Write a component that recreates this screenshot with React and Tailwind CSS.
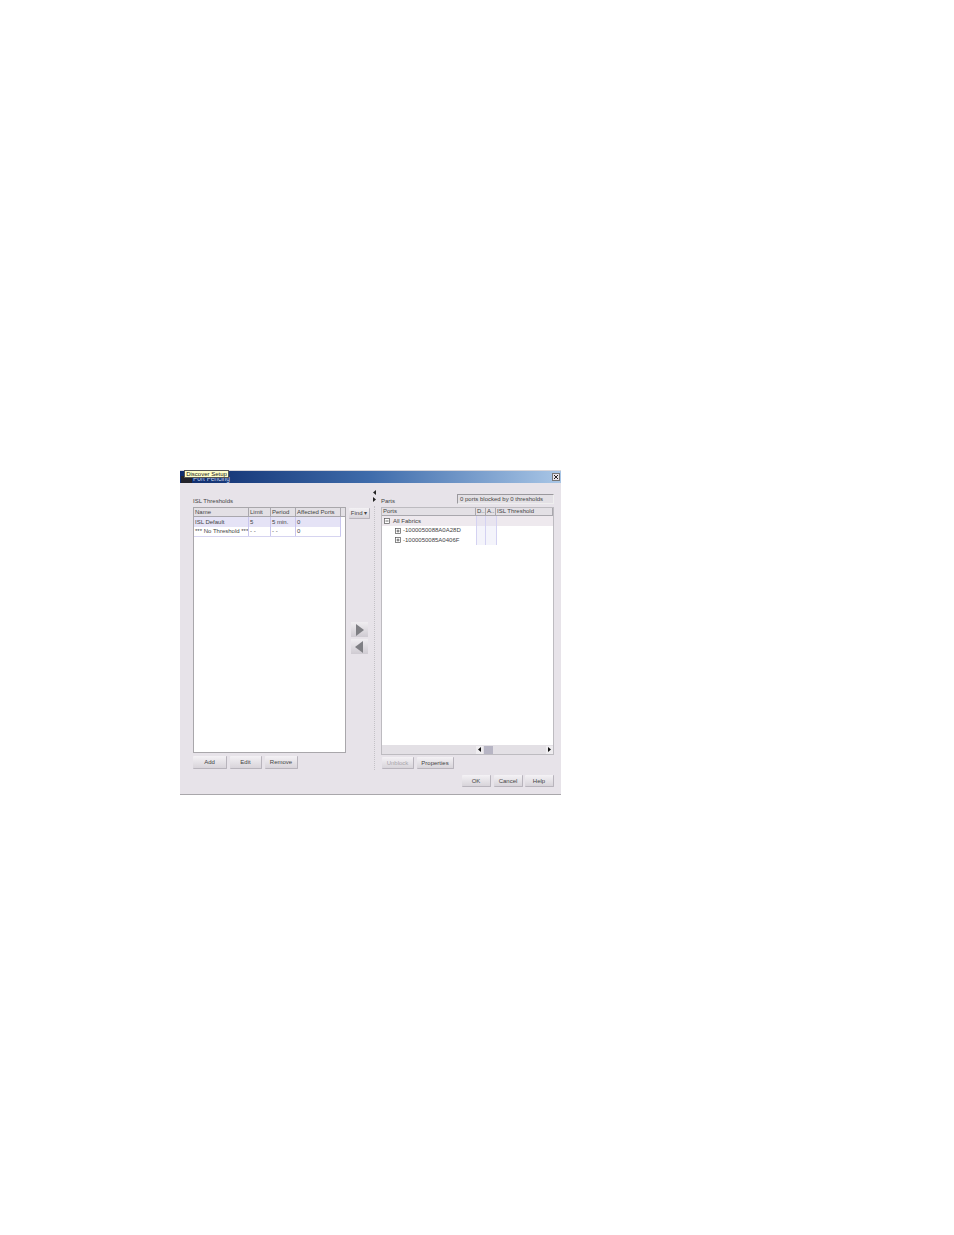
import React from "react";

const Btn = ({ w, h = "h-[12px] pt-[1px]", children, disabled }) => (
  <div
    className={`${h} ${w} flex items-center justify-center text-[6px] rounded-[1px] border-r border-b border-[#b8b4bc] bg-gradient-to-b from-[#f4f2f5] to-[#d8d4da] ${disabled ? "text-[#a8a6ac]" : "text-[#444]"}`}
  >
    {children}
  </div>
);

const Head = ({ w, children, flex }) => (
  <div className={`${flex ? "flex-1" : w} h-full flex items-center pl-[1px] border-r border-[#a9a7ad] truncate`}>{children}</div>
);

const Cell = ({ w, children }) => (
  <div className={`${w} h-full flex items-center pl-[1px] border-r border-[#c9c6ee] whitespace-nowrap overflow-hidden`}>{children}</div>
);

const Plus = ({ minus }) => (
  <svg width="6" height="6" viewBox="0 0 6 6" className="shrink-0">
    <rect x="0.5" y="0.5" width="5" height="5" fill="#fff" stroke="#555" strokeWidth="0.7" />
    <path d={minus ? "M1.5 3h3" : "M1.5 3h3M3 1.5v3"} stroke="#333" strokeWidth="0.7" />
  </svg>
);

export default function App() {
  return (
    <div className="min-h-[1235px] bg-white pt-[470px] pl-[180px] font-['Liberation_Sans',Arial,sans-serif] text-[#444]">
      <div className="relative w-[381px] h-[325px] bg-[#e7e3e9] border-t border-[#d8d6da] border-b border-b-[#a9a7ab] flex flex-col">
        {/* Title bar */}
        <div className="h-[12px] shrink-0 flex items-center justify-end pr-[1px] bg-gradient-to-r from-[#0e2a6b] via-[#3f6cab] to-[#a9c6e6]">
          <div className="w-[8px] h-[8px] bg-[#e7e3e9] border border-[#777] flex items-center justify-center">
            <svg width="6" height="6" viewBox="0 0 6 6">
              <path d="M1 1l4 4M5 1l-4 4" stroke="#222" strokeWidth="1" />
            </svg>
          </div>
        </div>
        <div className="absolute left-[1px] top-[5px] w-[11px] h-[7px] bg-[#23232b]" />
        <div className="absolute left-[13px] top-[4px] text-[6.5px] leading-[8px] text-[#c6d4ea] whitespace-nowrap">Port Fencing</div>
        {/* Tooltip */}
        <div className="absolute left-[4px] top-[-1px] h-[8px] w-[45px] bg-[#ffffc8] border border-[#555] flex items-center justify-center text-[6px] leading-none text-[#222] whitespace-nowrap">
          Discover Setup
        </div>

        {/* Body */}
        <div className="flex-1 flex pl-[13px] pr-[7px] pt-[11px]">
          {/* Left column */}
          <div className="w-[153px] flex flex-col shrink-0">
            <div className="h-[13px] flex items-center text-[6px] leading-none">ISL Thresholds</div>
            <div className="h-[246px] bg-white border border-[#a9a7ab] flex flex-col text-[6px]">
              <div className="h-[9px] flex bg-[#e3e0e5] border-b border-[#a9a7ad] shrink-0">
                <Head w="w-[55px]">Name</Head>
                <Head w="w-[22px]">Limit</Head>
                <Head w="w-[25px]">Period</Head>
                <Head w="w-[45px]">Affected Ports</Head>
                <div className="flex-1" />
              </div>
              <div className="w-[147px] h-[10px] flex bg-[#e5e3f6] shrink-0">
                <Cell w="w-[55px]">ISL Default</Cell>
                <Cell w="w-[22px]">5</Cell>
                <Cell w="w-[25px]">5 min.</Cell>
                <Cell w="w-[45px]">0</Cell>
              </div>
              <div className="w-[147px] h-[10px] flex border-b border-[#d6d4f0] shrink-0">
                <Cell w="w-[55px]">*** No Threshold ***</Cell>
                <Cell w="w-[22px]">- -</Cell>
                <Cell w="w-[25px]">- -</Cell>
                <Cell w="w-[45px]">0</Cell>
              </div>
            </div>
            <div className="flex gap-[3px] mt-[3px]">
              <Btn w="w-[34px]" h="h-[13px] pt-[1px]">Add</Btn>
              <Btn w="w-[32px]" h="h-[13px] pt-[1px]">Edit</Btn>
              <Btn w="w-[33px]" h="h-[13px] pt-[1px]">Remove</Btn>
            </div>
          </div>

          {/* Middle column */}
          <div className="w-[23px] ml-[2px] flex flex-col items-center shrink-0 pt-[14px]">
            <Btn w="w-[21px]" h="h-[11px]">Find ▾</Btn>
            <div className="mt-[103px] w-[17px] h-[15px] bg-gradient-to-b from-[#f0eef1] to-[#cfcbd2] flex items-center justify-center">
              <svg width="9" height="12" viewBox="0 0 9 12">
                <path d="M1 0l8 6-8 6z" fill="#7f7f84" />
              </svg>
            </div>
            <div className="mt-[2px] w-[17px] h-[15px] bg-gradient-to-b from-[#f0eef1] to-[#cfcbd2] flex items-center justify-center">
              <svg width="9" height="12" viewBox="0 0 9 12">
                <path d="M8 0L0 6l8 6z" fill="#7f7f84" />
              </svg>
            </div>
          </div>

          {/* Divider */}
          <div className="w-[6px] shrink-0 flex flex-col items-center">
            <div className="h-[16px] flex flex-col items-center gap-[2px] shrink-0 -mt-[4px]">
              <svg width="3" height="5" viewBox="0 0 3 5"><path d="M3 0L0 2.5 3 5z" fill="#222" /></svg>
              <svg width="3" height="5" viewBox="0 0 3 5"><path d="M0 0l3 2.5L0 5z" fill="#222" /></svg>
            </div>
            <div className="h-[264px] border-l border-dotted border-[#c4c2c7]" />
          </div>

          {/* Right column */}
          <div className="flex-1 flex flex-col pl-[4px] min-w-0">
            <div className="h-[13px] flex items-start justify-between">
              <div className="h-[13px] flex items-center text-[6px] leading-none">Parts</div>
              <div className="w-[97px] h-[10px] border border-[#9a989d] border-b-[#eee] border-r-[#eee] bg-[#e3e0e5] flex items-center pl-[2px] text-[6px] whitespace-nowrap">
                0 ports blocked by 0 thresholds
              </div>
            </div>
            <div className="h-[248px] flex flex-col bg-white border border-[#bdbbc0] text-[6px]">
              <div className="h-[8px] flex bg-[#e3e0e5] border-b border-[#a9a7ad] shrink-0">
                <Head w="w-[94px]">Ports</Head>
                <Head w="w-[10px]">D..</Head>
                <Head w="w-[10px]">A..</Head>
                <Head flex>ISL Threshold</Head>
              </div>
              <div className="relative flex-1 min-h-0">
                <div className="h-[10px] flex items-center bg-[#eee9ee] pl-[2px] gap-[3px]">
                  <Plus minus /> <span>All Fabrics</span>
                </div>
                <div className="h-[9px] flex items-center pl-[13px] gap-[2px]">
                  <Plus /> <span>-1000050088A0A28D</span>
                </div>
                <div className="h-[10px] flex items-center pl-[13px] gap-[2px]">
                  <Plus /> <span>-1000050085A0406F</span>
                </div>
                <div className="absolute left-[94px] top-0 h-[29px] w-[10px] border-x border-[#d4d2f2] bg-[#dcdaf2]/30" />
                <div className="absolute left-[104px] top-0 h-[29px] w-[11px] border-r border-[#d4d2f2] bg-[#dcdaf2]/30" />
              </div>
              <div className="h-[9px] flex justify-end bg-[#e3e0e5] shrink-0">
                <div className="w-[77px] flex items-center">
                  <div className="w-[7px] h-[8px] bg-[#efedf0] flex items-center justify-center">
                    <svg width="3" height="5" viewBox="0 0 3 5"><path d="M3 0L0 2.5 3 5z" fill="#111" /></svg>
                  </div>
                  <div className="w-[9px] h-[8px] ml-[1px] bg-[#b7b5c4]" />
                  <div className="flex-1" />
                  <div className="w-[7px] h-[8px] bg-[#efedf0] flex items-center justify-center">
                    <svg width="3" height="5" viewBox="0 0 3 5"><path d="M0 0l3 2.5L0 5z" fill="#111" /></svg>
                  </div>
                </div>
              </div>
            </div>
            <div className="flex gap-[3px] mt-[2px] pl-[1px]">
              <Btn w="w-[32px]" disabled>Unblock</Btn>
              <Btn w="w-[37px]">Properties</Btn>
            </div>
            <div className="flex justify-end mt-[6px]">
              <Btn w="w-[29px]">OK</Btn>
              <div className="w-[3px]" />
              <Btn w="w-[29px]">Cancel</Btn>
              <div className="w-[2px]" />
              <Btn w="w-[29px]">Help</Btn>
            </div>
          </div>
        </div>
      </div>
    </div>
  );
}
